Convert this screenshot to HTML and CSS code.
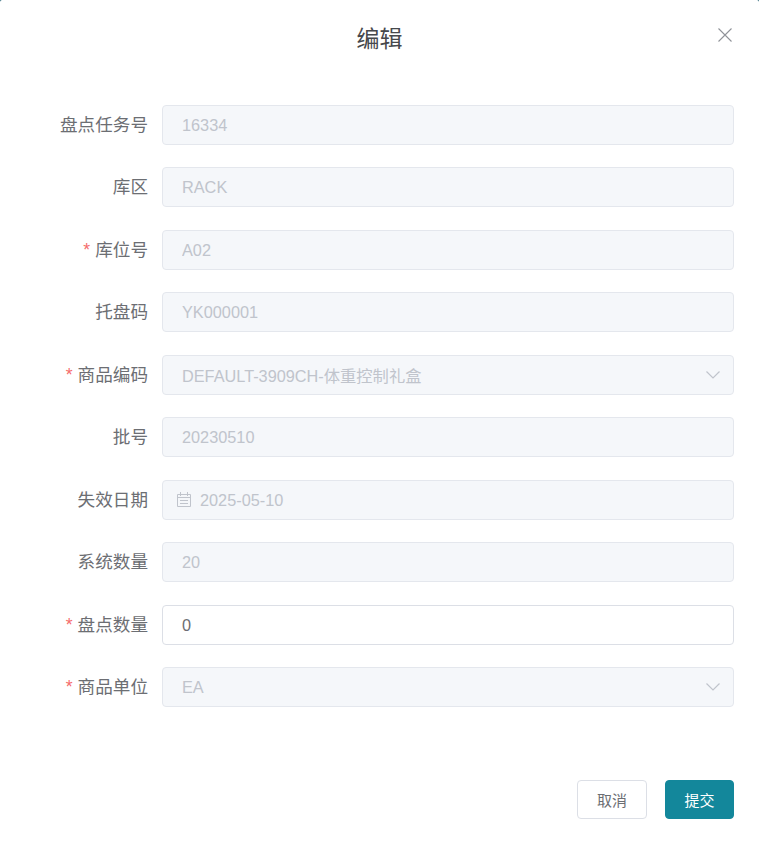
FILE: index.html
```html
<!DOCTYPE html>
<html lang="zh-CN">
<head>
  <meta charset="UTF-8">
  <meta name="viewport" content="width=device-width, initial-scale=1.0">
  <title>编辑</title>
  <link rel="stylesheet" href="styles.css">
</head>
<body>
  <div class="dialog">
    <div class="dialog-header">
      <span class="dialog-title">编辑</span>
      <button class="dialog-close" aria-label="关闭">
        <svg width="16" height="16" viewBox="0 0 16 16"><path d="M1.5 1.5l13 13M14.5 1.5l-13 13" fill="none" stroke="#909399" stroke-width="1.1"/></svg>
      </button>
    </div>

    <form class="form">
      <div class="form-item">
        <label class="form-label">盘点任务号</label>
        <div class="input-wrap"><input class="input" value="16334" disabled></div>
      </div>
      <div class="form-item">
        <label class="form-label">库区</label>
        <div class="input-wrap"><input class="input" value="RACK" disabled></div>
      </div>
      <div class="form-item">
        <label class="form-label required">库位号</label>
        <div class="input-wrap"><input class="input" value="A02" disabled></div>
      </div>
      <div class="form-item">
        <label class="form-label">托盘码</label>
        <div class="input-wrap"><input class="input" value="YK000001" disabled></div>
      </div>
      <div class="form-item">
        <label class="form-label required">商品编码</label>
        <div class="input-wrap">
          <input class="input" value="DEFAULT-3909CH-体重控制礼盒" disabled>
          <svg class="suffix-icon" width="16" height="10" viewBox="0 0 16 10"><path d="M1.5 1.5L8 8l6.5-6.5" fill="none" stroke="#c0c4cc" stroke-width="1.2"/></svg>
        </div>
      </div>
      <div class="form-item">
        <label class="form-label">批号</label>
        <div class="input-wrap"><input class="input" value="20230510" disabled></div>
      </div>
      <div class="form-item">
        <label class="form-label">失效日期</label>
        <div class="input-wrap">
          <svg class="prefix-icon" width="14" height="15" viewBox="0 0 14 15" fill="none" stroke="#c0c4cc" stroke-width="1">
            <path d="M.5 2.5h13v12H.5zM3.5 0v4M10.5 0v4M.5 5.5h13M3 8.5h8M3 11.5h8"/>
          </svg>
          <input class="input input-date" value="2025-05-10" disabled>
        </div>
      </div>
      <div class="form-item">
        <label class="form-label">系统数量</label>
        <div class="input-wrap"><input class="input" value="20" disabled></div>
      </div>
      <div class="form-item">
        <label class="form-label required">盘点数量</label>
        <div class="input-wrap"><input class="input" value="0"></div>
      </div>
      <div class="form-item">
        <label class="form-label required">商品单位</label>
        <div class="input-wrap">
          <input class="input" value="EA" disabled>
          <svg class="suffix-icon" width="16" height="10" viewBox="0 0 16 10"><path d="M1.5 1.5L8 8l6.5-6.5" fill="none" stroke="#c0c4cc" stroke-width="1.2"/></svg>
        </div>
      </div>
    </form>

    <div class="dialog-footer">
      <button class="btn">取消</button>
      <button class="btn btn-primary">提交</button>
    </div>
  </div>
</body>
</html>
```

FILE: styles.css
```css
* {
  box-sizing: border-box;
}
html, body {
  margin: 0;
  height: 100%;
}
html {
  background-color: #14586a; /* page behind the dialog, only the corners show */
}
body {
  font-family: "Liberation Sans", "Noto Sans CJK SC", sans-serif;
  color: #606266;
}
.dialog {
  width: 759px;
  height: 842px;
  padding: 0 25px 0 0;
  background-color: #fff;
  border-radius: 2px 2px 0 0;
  overflow: hidden;
}
.dialog-header {
  position: relative;
  height: 104.75px;
  padding-top: 23px;
  text-align: center;
}
.dialog-title {
  font-size: 23px;
  line-height: 32px;
  color: #46484c;
  margin-left: 25px;
}
.dialog-close {
  position: absolute;
  top: 27px;
  right: 1px;
  padding: 0;
  width: 16px;
  height: 16px;
  border: none;
  background: none;
  cursor: pointer;
}
.form {
  display: flex;
  flex-direction: column;
  gap: 22.5px;
}
.form-item {
  display: flex;
  height: 40px;
}
.form-label {
  width: 162px;
  padding-right: 14px;
  text-align: right;
  font-size: 17.6px;
  line-height: 40px;
  color: #6c6e73;
  white-space: nowrap;
}
.form-label.required::before {
  content: "*";
  color: #f56c6c;
  margin-right: 5px;
}
.input-wrap {
  position: relative;
  flex: 1;
}
.input {
  display: block;
  width: 100%;
  height: 40px;
  padding: 1px 15px 0 19px;
  border: 1px solid #dcdfe6;
  border-radius: 4px;
  font: inherit;
  font-size: 16.3px;
  color: #6c6e73;
  background-color: #fff;
  outline: none;
}
.input:disabled {
  color: #c0c4cc;
  background-color: #f5f7fa;
  border-color: #e4e7ed;
  -webkit-text-fill-color: #c0c4cc;
  opacity: 1;
}
.input-date {
  padding-left: 37px;
}
.prefix-icon {
  position: absolute;
  left: 14.5px;
  top: 12px;
}
.suffix-icon {
  position: absolute;
  right: 13px;
  top: 15px;
}
.dialog-footer {
  display: flex;
  justify-content: flex-end;
  gap: 18px;
  margin-top: 73px;
}
.btn {
  width: 70px;
  height: 39px;
  border: 1px solid #dcdfe6;
  border-radius: 4px;
  background-color: #fff;
  color: #6c6e73;
  font: inherit;
  font-size: 15px;
  cursor: pointer;
}
.btn-primary {
  width: 69px;
  border-color: #13879b;
  background-color: #13879b;
  color: #fff;
}
```
